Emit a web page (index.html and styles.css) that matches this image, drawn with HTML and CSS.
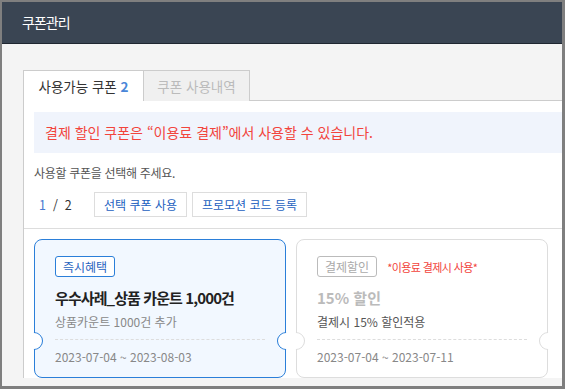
FILE: index.html
```html
<!DOCTYPE html>
<html lang="ko">
<head>
    <meta charset="UTF-8">
    <meta name="viewport" content="width=device-width, initial-scale=1.0">
    <title>쿠폰관리</title>
    <link rel="stylesheet" href="styles.css">
</head>
<body>
    <div class="modal">
        <div class="modal-header">쿠폰관리</div>
        <div class="modal-body">
            <div class="tabs">
                <div class="tab active">사용가능 쿠폰 <span class="tab-count">2</span></div>
                <div class="tab">쿠폰 사용내역</div>
            </div>
            <div class="panel">
                <div class="panel-top">
                    <div class="notice">결제 할인 쿠폰은 “이용료 결제”에서 사용할 수 있습니다.</div>
                    <p class="guide">사용할 쿠폰을 선택해 주세요.</p>
                    <div class="toolbar">
                        <span class="pager"><span class="pager-current">1</span>&nbsp; / &nbsp;2</span>
                        <button class="btn">선택 쿠폰 사용</button>
                        <button class="btn">프로모션 코드 등록</button>
                    </div>
                </div>
                <div class="coupon-list">
                    <div class="coupon selected">
                        <div class="coupon-tags">
                            <span class="tag tag-blue">즉시혜택</span>
                        </div>
                        <div class="coupon-title">우수사례_상품 카운트 1,000건</div>
                        <div class="coupon-desc">상품카운트 1000건 추가</div>
                        <div class="coupon-date">2023-07-04 ~ 2023-08-03</div>
                    </div>
                    <div class="coupon">
                        <div class="coupon-tags">
                            <span class="tag tag-gray">결제할인</span>
                            <span class="tag-note">*이용료 결제시 사용*</span>
                        </div>
                        <div class="coupon-title muted">15% 할인</div>
                        <div class="coupon-desc dark">결제시 15% 할인적용</div>
                        <div class="coupon-date">2023-07-04 ~ 2023-07-11</div>
                    </div>
                </div>
            </div>
        </div>
    </div>
</body>
</html>
```

FILE: styles.css
```css
/* Basic styling */
html {
    background: #7f7f7f;
}
body {
    margin: 0;
    padding: 2px 3px 3px 2px;
    height: 389px;
    box-sizing: border-box;
    overflow: hidden;
    font-family: "Noto Sans CJK KR", "Noto Sans", sans-serif;
    color: #333;
}
.modal {
    background: #f4f4f4;
    height: 100%;
    overflow: hidden;
}
.modal-header {
    background: #3a4553;
    border-bottom: 1px solid #1f2630;
    color: #fff;
    height: 41px;
    line-height: 40px;
    padding-left: 20px;
    font-size: 14px;
    letter-spacing: -1px;
}
.modal-body {
    padding: 26px 0 0 21px;
}

/* Tabs */
.tabs {
    display: flex;
    height: 31px;
    border-bottom: 1px solid #ccc;
    box-sizing: border-box;
}
.tab {
    box-sizing: border-box;
    height: 31px;
    line-height: 30px;
    font-size: 13.5px;
    border: 1px solid #ccc;
    border-bottom: none;
    background: #f0f0f0;
    color: #bbb;
    width: 107px;
    text-align: center;
}
.tab.active {
    width: 120px;
    background: #fff;
    color: #333;
    border-right: none;
}
.tab-count {
    color: #4a86d8;
    font-weight: bold;
}

/* Panel */
.panel {
    background: #fff;
    border-left: 1px solid #ccc;
}
.panel-top {
    padding: 11px 0 11px 10px;
    border-bottom: 1px solid #ddd;
}
.notice {
    background: #f0f4fc;
    color: #f2443c;
    font-size: 14px;
    height: 41px;
    line-height: 41px;
    padding-left: 11px;
}
.guide {
    margin: 11px 0 0;
    font-size: 12px;
    letter-spacing: -0.3px;
    line-height: 18px;
    color: #555;
}
.toolbar {
    display: flex;
    align-items: center;
    gap: 5px;
    margin-top: 10px;
}
.pager {
    font-size: 12.5px;
    width: 50px;
    padding-left: 5px;
    color: #333;
}
.pager-current {
    color: #4a7ad0;
}
.btn {
    font-family: inherit;
    font-size: 12px;
    height: 25px;
    padding: 0 9px;
    background: #fff;
    border: 1px solid #ddd;
    color: #1c5fc0;
}

/* Coupons */
.coupon-list {
    display: flex;
    gap: 10px;
    padding: 10px 0 0 10px;
}
.coupon {
    position: relative;
    width: 252px;
    box-sizing: border-box;
    border: 1px solid #ddd;
    border-radius: 8px;
    padding: 16px 20px 11px;
    background: #fff;
}
.coupon.selected {
    border-color: #2b7fd9;
    background: #f2f8ff;
}
/* ticket notches */
.coupon::before,
.coupon::after {
    content: "";
    position: absolute;
    top: 92px;
    width: 18px;
    height: 18px;
    box-sizing: border-box;
    border-radius: 50%;
    background: #fff;
    border: 1px solid transparent;
    transform: rotate(45deg);
}
.coupon::before {
    left: -10px;
    border-top-color: #ddd;
    border-right-color: #ddd;
}
.coupon::after {
    right: -10px;
    border-bottom-color: #ddd;
    border-left-color: #ddd;
}
.coupon.selected::before {
    border-top-color: #2b7fd9;
    border-right-color: #2b7fd9;
}
.coupon.selected::after {
    border-bottom-color: #2b7fd9;
    border-left-color: #2b7fd9;
}
.coupon-tags {
    display: flex;
    align-items: center;
    height: 21px;
}
.tag {
    box-sizing: border-box;
    height: 21px;
    line-height: 19px;
    padding: 0 7px;
    border: 1px solid;
    border-radius: 3px;
    font-size: 12px;
    background: #fff;
}
.tag-blue {
    border-color: #2b7fd9;
    color: #2a64c0;
}
.tag-gray {
    border-color: #bbb;
    color: #aaa;
}
.tag-note {
    margin-left: 10px;
    font-size: 11px;
    letter-spacing: -0.6px;
    color: #f2443c;
}
.coupon-title {
    margin-top: 11px;
    font-size: 15px;
    letter-spacing: -0.9px;
    font-weight: bold;
    line-height: 20px;
    color: #222;
}
.coupon-title.muted {
    color: #bbb;
    letter-spacing: 0;
}
.coupon-desc {
    margin-top: 5px;
    font-size: 12px;
    line-height: 18px;
    color: #888;
    padding-bottom: 8px;
    border-bottom: 1px dashed #ddd;
}
.coupon-desc.dark {
    color: #555;
}
.coupon-date {
    margin-top: 8px;
    font-size: 12px;
    line-height: 18px;
    color: #888;
}
```
